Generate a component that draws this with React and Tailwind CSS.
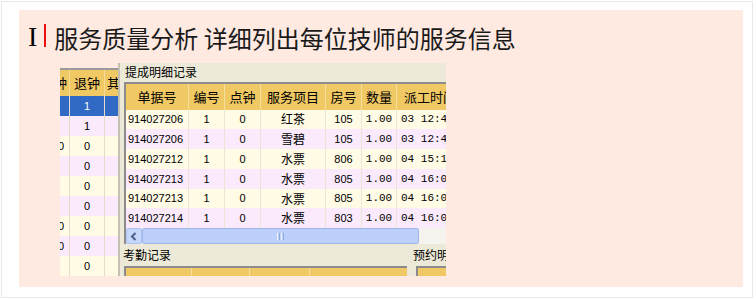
import React from 'react';

const cjk = { fontFamily: '"Noto Sans CJK SC", "Noto Sans", sans-serif' };
const sans = { fontFamily: '"Liberation Sans", Arial, sans-serif' };
const mono = { fontFamily: '"Liberation Mono", "Courier New", monospace' };

const cols = [
  { w: 63, label: '单据号' },
  { w: 36, label: '编号' },
  { w: 36, label: '点钟' },
  { w: 65, label: '服务项目' },
  { w: 36, label: '房号' },
  { w: 35, label: '数量' },
  { w: 60, label: '派工时间', left: true },
];

const rows = [
  ['914027206', '1', '0', '红茶', '105', '1.00', '03 12:44'],
  ['914027206', '1', '0', '雪碧', '105', '1.00', '03 12:44'],
  ['914027212', '1', '0', '水票', '806', '1.00', '04 15:19'],
  ['914027213', '1', '0', '水票', '805', '1.00', '04 16:06'],
  ['914027213', '1', '0', '水票', '805', '1.00', '04 16:06'],
  ['914027214', '1', '0', '水票', '803', '1.00', '04 16:06'],
];

const leftRows = [
  { a: '', b: '1', sel: true },
  { a: '', b: '1' },
  { a: '0', b: '0' },
  { a: '', b: '0' },
  { a: '', b: '0' },
  { a: '', b: '0' },
  { a: '0', b: '0' },
  { a: '0', b: '0' },
  { a: '', b: '0' },
];

function LeftTable() {
  return (
    <div className="w-[58px] shrink-0 flex flex-col pt-[5px] overflow-hidden">
      <div className="h-[28px] flex border-t-2 border-[#9a9a9a] bg-[#f0c864] text-[13px] text-black" style={cjk}>
        <div className="w-[10px] flex justify-end items-center overflow-hidden pr-[2px] border-r border-[#f6dc98]">
          <span className="shrink-0">钟</span>
        </div>
        <div className="w-[35px] flex justify-center items-center border-r border-[#f6dc98]">退钟</div>
        <div className="flex-1 flex items-center pl-[2px] overflow-hidden whitespace-nowrap">其他</div>
      </div>
      {leftRows.map((r, i) => {
        const bg = r.sel ? 'bg-[#316ac5] text-white' : i % 2 === 1 ? 'bg-[#faeafb] text-black' : 'bg-[#fffbe4] text-black';
        return (
          <div key={i} className={`h-[20px] flex text-[11px] ${bg}`} style={sans}>
            <div className="w-[10px] flex justify-end items-center overflow-hidden pr-[5px] border-r border-[#e6dccb]">
              <span className="shrink-0">{r.a}</span>
            </div>
            <div className="w-[35px] flex justify-center items-center border-r border-[#e6dccb]">{r.b}</div>
            <div className="flex-1" />
          </div>
        );
      })}
    </div>
  );
}

function ScrollBar() {
  return (
    <div className="h-[16px] flex bg-[#f4f3ee]">
      <div className="w-[16px] h-[16px] flex items-center justify-center rounded-[2px] border border-[#aec3f0] bg-[#c6d7fc]">
        <svg width="8" height="9" viewBox="0 0 8 9">
          <path d="M5.5 1 L2 4.5 L5.5 8" fill="none" stroke="#4a5f8c" strokeWidth="2" />
        </svg>
      </div>
      <div className="w-[277px] h-[16px] flex items-center justify-center rounded-[2px] border border-[#9fb6ea] bg-[#bcd0fb]">
        <div className="flex gap-[1px]">
          <div className="w-[1px] h-[7px] bg-[#eef3fe]" />
          <div className="w-[1px] h-[7px] bg-[#8fa8dc]" />
          <div className="w-[1px] h-[7px] bg-[#eef3fe]" />
          <div className="w-[1px] h-[7px] bg-[#8fa8dc]" />
        </div>
      </div>
      <div className="flex-1" />
    </div>
  );
}

function DetailTable() {
  return (
    <div className="ml-[4px] w-[322px] flex flex-col border-l-2 border-t-2 border-[#8c8c8c] overflow-hidden">
      <div className="h-[26px] flex bg-[#f0c864] text-[13px] text-black whitespace-nowrap" style={cjk}>
        {cols.map((c, i) => (
          <div
            key={i}
            className={`shrink-0 flex items-center overflow-hidden border-r border-[#f7dfa0] ${c.left ? 'pl-[7px]' : 'justify-center'}`}
            style={{ width: c.w }}
          >
            {c.label}
          </div>
        ))}
      </div>
      {rows.map((r, i) => (
        <div key={i} className={`h-[20px] flex text-black whitespace-nowrap ${i % 2 === 0 ? 'bg-[#fffbe4]' : 'bg-[#faeafb]'}`}>
          {r.map((v, j) => {
            let cls = 'justify-center text-[11px]';
            let font = sans;
            if (j === 0) cls = 'pl-[2px] text-[11px]';
            if (j === 3) { cls = 'justify-center text-[12px]'; font = cjk; }
            if (j === 5) { font = mono; }
            if (j === 6) { cls = 'pl-[4px] text-[11px]'; font = mono; }
            return (
              <div
                key={j}
                className={`shrink-0 flex items-center overflow-hidden border-r border-[#ebe3d3] ${cls}`}
                style={{ width: cols[j].w, ...font }}
              >
                {v}
              </div>
            );
          })}
        </div>
      ))}
      <ScrollBar />
    </div>
  );
}

function Screenshot() {
  return (
    <div className="ml-[41px] mt-[16px] w-[386px] h-[213px] flex overflow-hidden">
      <LeftTable />
      <div className="w-[328px] shrink-0 flex flex-col bg-[#ece9d8] border-l-2 border-[#c4c0b4] overflow-hidden">
        <div className="h-[19px] pl-[5px] flex items-center text-[12px] text-black" style={cjk}>
          提成明细记录
        </div>
        <DetailTable />
        <div className="h-[22px] flex items-center text-[12px] text-black whitespace-nowrap" style={cjk}>
          <div className="pl-[3px] w-[293px] shrink-0">考勤记录</div>
          <div className="shrink-0">预约明细</div>
        </div>
        <div className="flex">
          <div className="ml-[4px] w-[283px] h-[10px] flex border-t-2 border-l-2 border-[#8c8c8c] bg-[#f0c864]">
            <div className="w-[66px] border-r border-[#f7dfa0]" />
            <div className="w-[58px] border-r border-[#f7dfa0]" />
            <div className="w-[60px] border-r border-[#f7dfa0]" />
          </div>
          <div className="ml-[9px] w-[30px] h-[10px] border-t-2 border-l-2 border-[#8c8c8c] bg-[#f0c864]" />
        </div>
      </div>
    </div>
  );
}

export default function App() {
  return (
    <div className="w-[756px] h-[299px] bg-white">
      <div className="ml-[1px] mt-[1px] w-[752px] h-[297px] border border-[#e8e8e8] bg-white">
        <div className="ml-[17px] mt-[8px] w-[724px] h-[277px] bg-[#ffeae2] overflow-hidden">
          <div className="mt-[14px] h-[23px] flex items-center pl-[9px]">
            <span
              className="text-[28px] leading-[23px] text-black translate-y-[1px]"
              style={{ fontFamily: '"Liberation Serif", "Times New Roman", serif' }}
            >
              I
            </span>
            <div className="ml-[7px] w-[2px] h-[23px] bg-[#f01010]" />
            <span className="ml-[8px] text-[24px] leading-[23px] text-[#1a1a1a] translate-y-[2px]" style={cjk}>
              服务质量分析 详细列出每位技师的服务信息
            </span>
          </div>
          <Screenshot />
        </div>
      </div>
    </div>
  );
}
